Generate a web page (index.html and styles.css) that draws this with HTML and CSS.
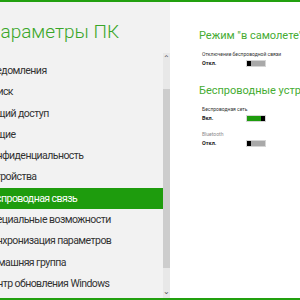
FILE: index.html
```html
<!DOCTYPE html>
<html lang="ru">
<head>
    <meta charset="UTF-8">
    <title>Параметры ПК</title>
    <link rel="stylesheet" href="styles.css">
</head>
<body>
    <div class="screen">
        <div class="sidebar">
            <div class="nav">
                <h1 class="title">Параметры ПК</h1>
                <ul class="menu">
                    <li>Уведомления</li>
                    <li>Поиск</li>
                    <li>Общий доступ</li>
                    <li>Общие</li>
                    <li>Конфиденциальность</li>
                    <li>Устройства</li>
                    <li class="active">Беспроводная связь</li>
                    <li>Специальные возможности</li>
                    <li>Синхронизация параметров</li>
                    <li>Домашняя группа</li>
                    <li>Центр обновления Windows</li>
                </ul>
            </div>
            <div class="scrollbar">
                <span class="arrow">&#8963;</span>
                <div class="track-top"></div>
                <div class="thumb"></div>
                <div class="track-bottom"></div>
                <span class="arrow down">&#8964;</span>
            </div>
        </div>

        <div class="content">
            <h2 class="section-title">Режим "в самолете"</h2>
            <div class="setting">
                <div class="label">Отключение беспроводной связи</div>
                <div class="state">
                    <span class="state-text">Откл.</span>
                    <span class="toggle"><span class="knob"></span></span>
                </div>
            </div>

            <h2 class="section-title">Беспроводные устройства</h2>
            <div class="setting">
                <div class="label">Беспроводная сеть</div>
                <div class="state">
                    <span class="state-text">Вкл.</span>
                    <span class="toggle on"><span class="knob"></span></span>
                </div>
            </div>
            <div class="setting">
                <div class="label muted">Bluetooth</div>
                <div class="state">
                    <span class="state-text">Откл.</span>
                    <span class="toggle"><span class="knob"></span></span>
                </div>
            </div>
        </div>
    </div>
</body>
</html>
```

FILE: styles.css
```css
body {
    margin: 0;
    font-family: Roboto, "Noto Sans", sans-serif;
    background-color: #ffffff;
    overflow: hidden;
}

.screen {
    display: flex;
    width: 300px;
    height: 300px;
    box-sizing: border-box;
    border-top: 2px solid #22a00f;
    border-bottom: 2px solid #22a00f;
    overflow: hidden;
}

.sidebar {
    display: flex;
    width: 170px;
    flex-shrink: 0;
    background-color: #f2f2f2;
}

.nav {
    flex: 1;
    overflow: hidden;
}

.title {
    margin: 18px 0 0 -13px;
    font-size: 19px;
    font-weight: 300;
    line-height: 24px;
    color: #3aa629;
    white-space: nowrap;
}

.menu {
    list-style: none;
    margin: 16px 0 0 0;
    padding: 0;
}

.menu li {
    height: 21.3px;
    line-height: 21.3px;
    text-indent: -15px;
    font-size: 10.5px;
    letter-spacing: -0.55px;
    color: #333333;
    white-space: nowrap;
}

.menu li.active {
    background-color: #1e9c0d;
    color: #ffffff;
}

.scrollbar {
    display: flex;
    flex-direction: column;
    width: 7px;
    margin-top: 51px;
    background-color: #e8e8e8;
}

.arrow {
    height: 12px;
    font-size: 8px;
    line-height: 12px;
    text-align: center;
    color: #555555;
}

.track-top {
    height: 24px;
}

.thumb {
    flex: 1;
    background-color: #cdcdcd;
}

.track-bottom {
    height: 18px;
}

.content {
    flex: 1;
    padding: 26px 0 0 29px;
    white-space: nowrap;
    overflow: hidden;
}

.section-title {
    margin: 15px 0 6px 0;
    font-size: 11px;
    font-weight: 400;
    line-height: 16px;
    color: #45ac33;
}

.section-title:first-child {
    margin-top: 0;
}

.setting {
    margin-top: 7px;
    padding-left: 3px;
}

.section-title + .setting {
    margin-top: 0;
}

.label {
    font-size: 5px;
    line-height: 8px;
    color: #333333;
}

.label.muted {
    color: #8a8a8a;
}

.state {
    display: flex;
    align-items: center;
    height: 10px;
}

.state-text {
    width: 44px;
    font-size: 5.5px;
    font-weight: 700;
    color: #222222;
}

.toggle {
    display: flex;
    width: 20px;
    height: 7px;
    box-sizing: border-box;
    border: 1px solid #d6d6d6;
    background-color: #a9a9a9;
}

.toggle .knob {
    width: 4px;
    height: 100%;
    background-color: #000000;
}

.toggle.on {
    justify-content: flex-end;
    background-color: #1e9c0d;
}
```
